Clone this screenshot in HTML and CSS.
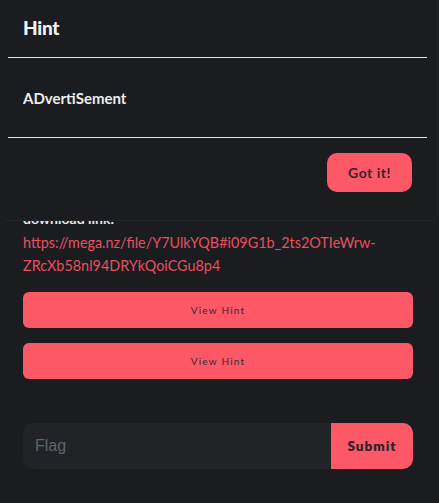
FILE: index.html
```html
<!DOCTYPE html>
<html lang="en">
<head>
<meta charset="utf-8">
<title>Hint</title>
<link rel="stylesheet" href="styles.css">
</head>
<body>
<main class="page">
  <p class="label">download link:</p>
  <a class="link" href="#">https://mega.nz/file/Y7UlkYQB#i09G1b_2ts2OTIeWrw-ZRcXb58nl94DRYkQoiCGu8p4</a>
  <div class="hints">
    <button class="hint-btn">View Hint</button>
    <button class="hint-btn">View Hint</button>
  </div>
  <form class="flag-form">
    <input class="flag-input" type="text" placeholder="Flag">
    <button class="submit-btn" type="button">Submit</button>
  </form>
</main>
<div class="modal">
  <div class="modal-content">
    <div class="modal-header"><h2 class="modal-title">Hint</h2></div>
    <div class="modal-body"><p class="modal-text">ADvertiSement</p></div>
    <div class="modal-footer"><button class="got-btn">Got it!</button></div>
  </div>
</div>
</body>
</html>
```
FILE: styles.css
```css
* { box-sizing: border-box; }
html, body { margin: 0; padding: 0; }
body {
  background: #1b1c20;
  color: #e9e9ea;
  font-family: "Lato", "Liberation Sans", sans-serif;
  width: 439px;
  height: 503px;
  overflow: hidden;
  position: relative;
}
.page {
  padding: 208px 26px 0 23px;
}
.label {
  margin: 0;
  font-size: 14px;
  font-weight: 700;
  line-height: 22px;
  color: #e9e9ea;
}
.link {
  display: block;
  color: #e8505f;
  text-decoration: none;
  font-size: 14.4px;
  line-height: 23px;
  margin-top: 1px;
}
.hints {
  display: flex;
  flex-direction: column;
  gap: 15px;
  margin-top: 15px;
}
.hint-btn {
  height: 36px;
  width: 390px;
  border: none;
  border-radius: 6px;
  background: #fc5868;
  color: #3a2a30;
  font-family: "Lato", sans-serif;
  font-size: 10px;
  letter-spacing: 1.2px;
  font-weight: 400;
  padding: 0;
}
.flag-form {
  display: flex;
  margin-top: 44px;
  width: 390px;
  height: 46px;
}
.flag-input {
  flex: 1;
  min-width: 0;
  border: none;
  outline: none;
  background: #222326;
  border-radius: 10px 0 0 10px;
  padding: 0 12px;
  font-family: "Liberation Sans", Arial, sans-serif;
  font-size: 16px;
  color: #ccc;
}
.flag-input::placeholder { color: #5f656b; }
.submit-btn {
  width: 82px;
  border: none;
  background: #fc5868;
  border-radius: 0 10px 10px 0;
  color: #2c2429;
  font-family: "Lato", sans-serif;
  font-weight: 800;
  font-size: 13.5px;
  letter-spacing: 1px;
  padding: 0;
}
.modal {
  position: absolute;
  top: 0;
  left: 0;
  width: 438px;
  height: 221px;
  background: #1b1c20;
  border-bottom: 1px solid #25262a;
  border-right: 1px solid #212226;
  border-radius: 0 0 9px 9px;
}
.modal-content {
  margin: 0 10px 0 8px;
}
.modal-header {
  height: 58px;
  border-bottom: 1px solid #e4e4e6;
  padding: 16px 15px 0;
}
.modal-title {
  margin: 0;
  font-size: 19px;
  font-weight: 900;
  line-height: 24px;
  letter-spacing: -0.3px;
  color: #f2f2f3;
}
.modal-body {
  height: 80px;
  border-bottom: 1px solid #e4e4e6;
  padding: 30px 15px 0;
}
.modal-text {
  margin: 0;
  font-size: 15px;
  font-weight: 700;
  line-height: 20px;
  color: #ededee;
}
.modal-footer {
  display: flex;
  justify-content: flex-end;
  padding: 15px 15px 0;
}
.got-btn {
  width: 85px;
  height: 39px;
  border: none;
  border-radius: 10px;
  background: #fc5868;
  color: #2e262b;
  font-family: "Lato", sans-serif;
  font-weight: 700;
  font-size: 14px;
  letter-spacing: 0.5px;
  padding: 0;
}
```
